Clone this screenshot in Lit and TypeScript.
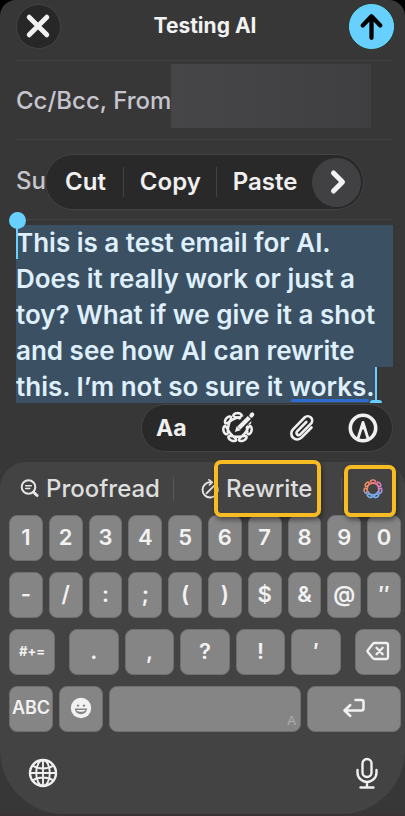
import { LitElement, html, css, svg } from "lit";
import { customElement, property } from "lit/decorators.js";

/** Closed seven-lobed knot with round loops, one of them at the top. */
function knotPath(c: number, radius: number, swing: number): string {
  const steps = 280;
  const points: string[] = [];
  for (let i = 0; i < steps; i++) {
    const t = (i / steps) * Math.PI * 2;
    const angle = t - 0.54 * Math.sin(7 * t);
    const r = radius + swing * Math.cos(7 * t);
    points.push(`${(c + r * Math.sin(angle)).toFixed(2)} ${(c - r * Math.cos(angle)).toFixed(2)}`);
  }
  return `M${points.join("L")}Z`;
}

const icons = {
  close: svg`<svg width="44" height="44" viewBox="0 0 44 44" fill="none" stroke="#f2f2f2" stroke-width="5" stroke-linecap="round"><path d="M12.500 13 30.500 31M30.500 13 12.500 31"/></svg>`,
  send: svg`<svg width="44" height="44" viewBox="0 0 44 44" fill="none" stroke="#000" stroke-width="4.400" stroke-linecap="round" stroke-linejoin="round"><path d="M22 34V13M13 21.500 22 12l9 9.500"/></svg>`,
  next: svg`<svg width="24" height="28" viewBox="0 0 24 28" fill="none" stroke="#f2f2f2" stroke-width="5" stroke-linecap="round" stroke-linejoin="round"><path d="M8.500 5 17.500 14 8.500 23"/></svg>`,
  compose: svg`<svg width="36" height="36" viewBox="0 0 36 36" fill="none" stroke-linecap="round">
    <path d="${knotPath(17.5, 11.8, 2.6)}" stroke="#f0f0f0" stroke-width="2.500"/>
    <path d="M18 18 33 3" stroke="#292929" stroke-width="9"/>
    <path d="M18.800 18 29.300 7.500" stroke="#f0f0f0" stroke-width="4.400" stroke-linecap="butt"/>
    <path d="M14.800 22l1.800-5.800 4 4z" fill="#f0f0f0"/>
    <path d="M31.400 5.400l.8-.8" stroke="#f0f0f0" stroke-width="4.200"/>
  </svg>`,
  clip: svg`<svg width="26" height="30" viewBox="0 0 26 30" fill="none" stroke="#f0f0f0" stroke-width="2.600" stroke-linecap="round" stroke-linejoin="round"><path d="M22.500 14.500 12.500 24.700a5.900 5.900 0 0 1-8.500-8.300L15.600 4.500a4.400 4.400 0 0 1 6.300 6.200L11.300 21.400a2.200 2.200 0 0 1-3.200-3.100L17.300 9"/></svg>`,
  markup: svg`<svg width="30" height="30" viewBox="0 0 30 30" fill="none" stroke="#f0f0f0"><circle cx="15" cy="15" r="12.700" stroke-width="3.600"/><path d="M10 25.500 15 9.500l5 16" stroke-width="2.800" stroke-linejoin="round"/><path d="M15 8l-2.600 8h5.200z" fill="#f0f0f0" stroke="#f0f0f0" stroke-linejoin="round"/></svg>`,
  proof: svg`<svg width="20" height="20" viewBox="0 0 20 20" fill="none" stroke="#e6e6e6" stroke-width="2" stroke-linecap="round"><circle cx="8.500" cy="8" r="6.800"/><path d="M13.500 13.200l3.600 3.300" stroke-width="3"/><path d="M5.700 6.700h5.600M5.700 9.500h4" stroke-width="1.500"/></svg>`,
  rewrite: svg`<svg width="20" height="20" viewBox="0 0 20 20" fill="none" stroke="#e6e6e6" stroke-width="1.900" stroke-linecap="round" stroke-linejoin="round"><path d="M11.500 3.400A7.600 7.600 0 1 0 17.500 9"/><path d="M9 .8l3.300 2.600L9.500 6" stroke-width="1.700"/><path d="M6.500 14.300 14.500 6.300"/></svg>`,
  knot: svg`<svg width="20" height="20" viewBox="0 0 20 20" fill="none"><defs><linearGradient id="glow" x1="0" y1="0.200" x2="1" y2="0.800"><stop offset="0" stop-color="#f39a4c"/><stop offset="0.450" stop-color="#f0788c"/><stop offset="1" stop-color="#c48cf0"/></linearGradient><linearGradient id="cool" x1="0" y1="0" x2="0" y2="1"><stop offset="0.550" stop-color="#5fb4f5" stop-opacity="0"/><stop offset="0.850" stop-color="#5fb4f5"/></linearGradient></defs><path d="${knotPath(10, 7.3, 1.7)}" stroke="url(#glow)" stroke-width="1.400"/><path d="${knotPath(10, 7.3, 1.7)}" stroke="url(#cool)" stroke-width="1.400"/></svg>`,
  erase: svg`<svg width="24" height="20" viewBox="0 0 24 20" fill="none" stroke="#f2f2f2" stroke-width="2.300" stroke-linecap="round" stroke-linejoin="round"><path d="M8.500 2H20a2 2 0 0 1 2 2v12a2 2 0 0 1-2 2H8.500a2 2 0 0 1-1.500-.7L2 11.200a1.600 1.600 0 0 1 0-2.200L7 2.700A2 2 0 0 1 8.500 2z"/><path d="M10.500 6.800l6.200 6.400M16.700 6.800l-6.200 6.400"/></svg>`,
  enter: svg`<svg width="24" height="20" viewBox="0 0 24 20" fill="none" stroke="#f2f2f2" stroke-width="2.500" stroke-linecap="round" stroke-linejoin="round"><path d="M13.500 2H19.500a2 2 0 0 1 2 2v6.500a2 2 0 0 1-2 2H3M8.300 7 2.500 12.500l5.800 5.500"/></svg>`,
  smile: svg`<svg width="22" height="22" viewBox="0 0 22 22"><circle cx="11" cy="11" r="10.200" fill="#f2f2f2"/><circle cx="8" cy="8.600" r="1.200" fill="#858585"/><circle cx="14" cy="8.600" r="1.200" fill="#858585"/><path d="M4.800 11.600h12.400c-.4 3.600-2.900 5.600-6.200 5.600s-5.800-2-6.200-5.600z" fill="#858585"/><path d="M6.200 12.900h9.600c-.7 1.200-2.500 1.800-4.800 1.800s-4.100-.6-4.800-1.800z" fill="#f2f2f2"/></svg>`,
  globe: svg`<svg width="30" height="30" viewBox="0 0 30 30" fill="none" stroke="#f0f0f0" stroke-width="1.900"><circle cx="15" cy="15" r="13" stroke-width="2.400"/><ellipse cx="15" cy="15" rx="6.800" ry="13"/><path d="M15 2v26M2 15h26M4.500 7.500c3 2 6.500 3 10.500 3s7.500-1 10.500-3M4.500 22.500c3-2 6.500-3 10.500-3s7.500 1 10.500 3"/></svg>`,
  mic: svg`<svg width="24" height="32" viewBox="0 0 24 32" fill="none" stroke="#f0f0f0" stroke-width="2.400" stroke-linecap="round"><rect x="7.500" y="2" width="9" height="18" rx="4.500"/><path d="M2.500 13v2.500a9.500 9.500 0 0 0 19 0V13M12 25v5M5.500 30.500h13"/></svg>`,
};

@customElement("mail-header")
class MailHeader extends LitElement {
  static styles = css`
    .bar { display: flex; justify-content: space-between; align-items: center; height: 52px; padding: 0 11px 0 16px; }
    .title { margin: 0; padding-bottom: 2px; font-size: 21px; font-weight: 700; color: #f2f2f2; }
    .round { display: flex; width: 45px; height: 45px; padding: 0; align-items: center; justify-content: center; border: 1px solid #434344; border-radius: 50%; background: #272727; }
    .send { background: #67d0fe; border-color: #5be4ff; }
  `;
  render() {
    return html`<header class="bar">
      <button class="round" aria-label="Close">${icons.close}</button>
      <h1 class="title">Testing AI</h1>
      <button class="round send" aria-label="Send">${icons.send}</button>
    </header>`;
  }
}

@customElement("edit-menu")
class EditMenu extends LitElement {
  static styles = css`
    .menu { display: flex; align-items: center; box-sizing: border-box; height: 56px; border: 1px solid #434344; border-radius: 28px; background: #292929; padding: 0 2px 0 0; }
    .item { height: 30px; border: 0; border-left: 1px solid #434344; background: none; color: #f0f0f0; font: 600 24px/30px Inter, "Liberation Sans", sans-serif; padding: 0 15px 0 16px; }
    .first { border-left: 0; padding: 0 17px 0 19px; }
    .more { display: flex; align-items: center; justify-content: center; width: 49px; height: 49px; padding: 0; border: 0; border-radius: 50%; background: #414143; }
  `;
  render() {
    return html`<div class="menu" role="toolbar" aria-label="Edit">
      <button class="item first">Cut</button>
      <button class="item">Copy</button>
      <button class="item">Paste</button>
      <button class="more" aria-label="More">${icons.next}</button>
    </div>`;
  }
}

@customElement("message-body")
class MessageBody extends LitElement {
  @property() text = "";
  static styles = css`
    .body { position: relative; margin: 5px 12px -1px 16px; }
    .field {
      display: block; box-sizing: border-box; width: 100%; height: 180px; margin: 0; padding: 0; border: 0; outline: 0; resize: none; overflow: hidden;
      color: #dff0fc; font: 600 26px/36px Inter, "Liberation Sans", sans-serif; white-space: pre;
      background: linear-gradient(#3c5063, #3c5063) 0 0 / 100% 142px no-repeat, linear-gradient(#3c5063, #3c5063) 0 142px / 360px 36px no-repeat;
    }
    .start { position: absolute; left: 0; top: -4px; width: 2px; height: 38px; background: #67d0fe; }
    .knob { position: absolute; left: -7px; top: -13px; width: 17px; height: 17px; border-radius: 50%; background: #67d0fe; }
    .end { position: absolute; left: 359px; top: 142px; width: 2px; height: 36px; background: #67d0fe; }
    .foot { position: absolute; left: 354px; bottom: 2px; width: 12px; height: 3px; border-radius: 6px 6px 0 0; background: #67d0fe; }
    .hint { position: absolute; left: 275px; bottom: 3px; width: 78px; height: 3px; border-radius: 2px; background: #2e6bce; }
  `;
  render() {
    return html`<div class="body">
      <textarea class="field" aria-label="Message" rows="5" spellcheck="false" .value=${this.text}></textarea>
      <i class="hint"></i><i class="start"></i><i class="knob"></i><i class="end"></i><i class="foot"></i>
    </div>`;
  }
}

@customElement("format-bar")
class FormatBar extends LitElement {
  static styles = css`
    .bar { display: flex; align-items: center; justify-content: space-between; box-sizing: border-box; width: 252px; height: 48px; margin: 0 12px 0 auto; padding: 0 14px; border: 1px solid #424243; border-radius: 24px; background: #292929; }
    .tool { display: flex; padding: 0; border: 0; background: none; color: #f0f0f0; font: 700 23px/30px Inter, "Liberation Sans", sans-serif; }
  `;
  render() {
    return html`<div class="bar" role="toolbar" aria-label="Format">
      <button class="tool">Aa</button>
      <button class="tool" aria-label="Writing tools">${icons.compose}</button>
      <button class="tool" aria-label="Attach">${icons.clip}</button>
      <button class="tool" aria-label="Markup">${icons.markup}</button>
    </div>`;
  }
}

@customElement("key-board")
class KeyBoard extends LitElement {
  static styles = css`
    .board { box-sizing: border-box; height: 352px; padding: 0 4px 0 9px; border-radius: 26px 26px 64px 64px; background: #434344; }
    .suggest { display: flex; align-items: center; height: 53px; }
    .option { position: relative; display: flex; align-items: center; gap: 6px; height: 53px; padding: 0; border: 0; background: none; color: #dedede; font: 500 24px/30px Inter, "Liberation Sans", sans-serif; }
    .proof { padding-left: 11px; }
    .rewrite { margin-left: 26px; }
    .tools { margin: 0 18px 0 21px; }
    .rule { width: 1px; height: 24px; margin-left: 13px; background: #585859; }
    .last { margin-left: auto; }
    .mark { position: absolute; box-sizing: border-box; border: 4px solid #f9bb23; border-radius: 7px; box-shadow: 1px 3px 5px #00000070; z-index: 1; pointer-events: none; }
    .wide { inset: -2px -9px -2px 14px; }
    .small { inset: 3px -13px -2px -19px; }
    .keys { display: grid; gap: 11px; }
    .row { display: flex; gap: 6px; }
    .group { display: flex; flex: 1; gap: 6px; margin: 0 8px; }
    .key { display: flex; flex: 1 1 0; align-items: center; justify-content: center; min-width: 0; height: 46px; padding: 0 0 2px; border: 1px solid #6f6f70; border-radius: 8px; background: #858585; color: #f2f2f2; font: 600 22px/28px Inter, "Liberation Sans", sans-serif; box-sizing: border-box; }
    .side { flex: 0 0 46px; }
    .text { font-size: 18px; }
    .tiny { font-size: 13px; font-weight: 700; }
    .mode { flex: 0 0 44px; }
    .enter { flex: 0 0 94px; }
    .space { align-items: flex-end; justify-content: flex-end; color: #b0b0b0; font: 400 13px/16px "Liberation Sans", sans-serif; padding: 0 4px 2px; }
    .foot { display: flex; justify-content: space-between; align-items: center; padding: 25px 22px 0 19px; }
    .plain { display: flex; padding: 0; border: 0; background: none; }
  `;
  private keys(list: string[]) {
    return list.map((k) => html`<button class="key">${k}</button>`);
  }
  render() {
    return html`<section class="board" aria-label="Keyboard">
      <div class="suggest">
        <button class="option proof">${icons.proof}Proofread</button>
        <span class="rule"></span>
        <button class="option rewrite">${icons.rewrite}Rewrite<span class="mark wide"></span></button>
        <span class="rule last"></span>
        <button class="option tools" aria-label="Writing tools">${icons.knot}<span class="mark small"></span></button>
      </div>
      <div class="keys">
        <div class="row">${this.keys([..."1234567890"])}</div>
        <div class="row">${this.keys([..."-/:;()$&@″"])}</div>
        <div class="row">
          <button class="key side tiny">#+=</button>
          <div class="group">${this.keys([...".,?!′"])}</div>
          <button class="key side" aria-label="Delete">${icons.erase}</button>
        </div>
        <div class="row">
          <button class="key mode text">ABC</button>
          <button class="key mode" aria-label="Emoji">${icons.smile}</button>
          <button class="key space" aria-label="Space">A</button>
          <button class="key enter" aria-label="Return">${icons.enter}</button>
        </div>
      </div>
      <div class="foot">
        <button class="plain" aria-label="Next keyboard">${icons.globe}</button>
        <button class="plain" aria-label="Dictate">${icons.mic}</button>
      </div>
    </section>`;
  }
}

@customElement("app-root")
class AppRoot extends LitElement {
  static styles = css`
    :host { display: block; min-height: 100vh; background: linear-gradient(#000 50%, #3a3335 50%); font-family: Inter, "Liberation Sans", sans-serif; }
    .screen { display: flex; flex-direction: column; min-height: calc(100vh - 2px); border-radius: 16px 16px 0 0; background: #373738; }
    .fields { padding: 8px 12px 0 16px; }
    .line { position: relative; display: flex; align-items: center; box-sizing: border-box; height: 79px; border-top: 1px solid #434344; color: #c6c5cd; font-size: 24px; font-weight: 500; line-height: 30px; }
    .line + .line { height: 81px; border-bottom: 1px solid #434344; }
    .name { padding-top: 2px; }
    .from { flex: 1; min-width: 0; height: 64px; box-sizing: border-box; margin: 0 22px 8px 0; padding: 0; border: 0; background: linear-gradient(90deg, #464648, #434345 50%, #3f3f41); }
    .menu { position: absolute; left: 29px; top: 14px; }
    .board { margin-top: 10px; }
  `;
  private readonly message = [
    "This is a test email for AI.",
    "Does it really work or just a",
    "toy? What if we give it a shot",
    "and see how AI can rewrite",
    "this. I’m not so sure it works.",
  ].join("\n");
  render() {
    return html`<main class="screen">
      <mail-header></mail-header>
      <div class="fields">
        <div class="line"><label class="name" for="from">Cc/Bcc, From</label><input class="from" id="from" /></div>
        <div class="line"><span class="name">Su</span><edit-menu class="menu"></edit-menu></div>
      </div>
      <message-body .text=${this.message}></message-body>
      <format-bar></format-bar>
      <key-board class="board"></key-board>
    </main>`;
  }
}
